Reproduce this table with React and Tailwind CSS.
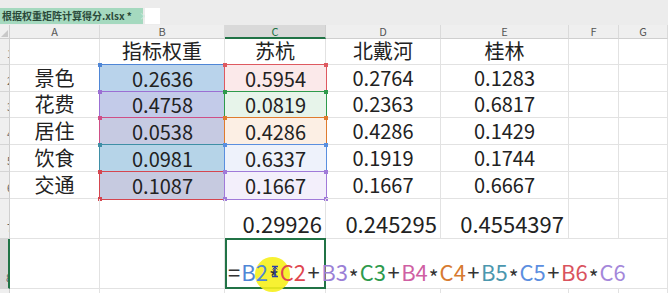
import React from 'react'

const COLS = ['A', 'B', 'C', 'D', 'E', 'F', 'G']

const rows = [
  { n: 2, name: '景色', w: '0.2636', c: '0.5954', d: '0.2764', e: '0.1283', wRef: 'blue', cRef: 'red' },
  { n: 3, name: '花费', w: '0.4758', c: '0.0819', d: '0.2363', e: '0.6817', wRef: 'purple', cRef: 'green' },
  { n: 4, name: '居住', w: '0.0538', c: '0.4286', d: '0.4286', e: '0.1429', wRef: 'pink', cRef: 'orange' },
  { n: 5, name: '饮食', w: '0.0981', c: '0.6337', d: '0.1919', e: '0.1744', wRef: 'teal', cRef: 'blue2' },
  { n: 6, name: '交通', w: '0.1087', c: '0.1667', d: '0.1667', e: '0.6667', wRef: 'red2', cRef: 'purple2' },
]

// reference colours: outline, corner handle, fill, formula text
const REF = {
  blue: { line: 'border-[#4f86d6]', dot: 'bg-[#4f86d6]', fill: 'bg-[#b9d3eb]', text: 'text-[#4f86d6]' },
  purple: { line: 'border-[#9b6fd3]', dot: 'bg-[#9b6fd3]', fill: 'bg-[#c3cbe9]', text: 'text-[#9b7fd6]' },
  pink: { line: 'border-[#cf4f86]', dot: 'bg-[#cf4f86]', fill: 'bg-[#c6cae2]', text: 'text-[#cf5fa3]' },
  teal: { line: 'border-[#3f8fa6]', dot: 'bg-[#3f8fa6]', fill: 'bg-[#b6d4e8]', text: 'text-[#4b97ae]' },
  red2: { line: 'border-[#d5464f]', dot: 'bg-[#d5464f]', fill: 'bg-[#c6cae0]', text: 'text-[#d9535e]' },
  red: { line: 'border-[#de5960]', dot: 'bg-[#de5960]', fill: 'bg-[#fbe9ea]', text: 'text-[#e0474f]' },
  green: { line: 'border-[#2e9a4b]', dot: 'bg-[#2e9a4b]', fill: 'bg-[#e7f4ea]', text: 'text-[#2d9a4c]' },
  orange: { line: 'border-[#df7b2e]', dot: 'bg-[#df7b2e]', fill: 'bg-[#fcefe4]', text: 'text-[#d77a30]' },
  blue2: { line: 'border-[#5a8fdf]', dot: 'bg-[#5a8fdf]', fill: 'bg-[#eef2fb]', text: 'text-[#5b8ee0]' },
  purple2: { line: 'border-[#a07ad9]', dot: 'bg-[#a07ad9]', fill: 'bg-[#f3effb]', text: 'text-[#a487da]' },
}

const formula = [
  ['B2', 'blue'], ['C2', 'red'], ['B3', 'purple'], ['C3', 'green'], ['B4', 'pink'],
  ['C4', 'orange'], ['B5', 'teal'], ['C5', 'blue2'], ['B6', 'red2'], ['C6', 'purple2'],
]

const font = "font-['Noto_Sans_CJK_SC','Noto_Sans',sans-serif]"

const Grid = ({ className = '', children }) => (
  <div className={`relative border-r border-b border-[#e2e2e2] ${className}`}>{children}</div>
)

const RowHead = ({ n, active }) => (
  <div
    className={`flex items-end justify-end overflow-hidden border-b border-[#d5d5d5] text-[11px] leading-none text-[#666] ${
      active ? 'bg-[#d6d6d6] border-r-2 border-r-[#217346]' : 'bg-[#efefef] border-r border-r-[#cfcfcf]'
    }`}
  >
    <span className="mr-[-4px] mb-[5px]">{n}</span>
  </div>
)

const RefCell = ({ refKey, value }) => {
  const r = REF[refKey]
  return (
    <div className={`relative flex items-end justify-center pb-[1px] ${r.fill}`}>
      <span className={`absolute -top-px -left-px -right-px -bottom-px border ${r.line}`} />
      <span className={`absolute -top-[2px] -left-[2px] w-[4px] h-[4px] ${r.dot}`} />
      <span className={`absolute -top-[2px] -right-[2px] w-[4px] h-[4px] ${r.dot}`} />
      <span className={`absolute -bottom-[2px] -left-[2px] w-[4px] h-[4px] ${r.dot}`} />
      <span className={`absolute -bottom-[2px] -right-[2px] w-[4px] h-[4px] ${r.dot}`} />
      <span className="relative text-[20px] leading-[24px] text-[#222]">{value}</span>
    </div>
  )
}

const TextCell = ({ children }) => (
  <Grid className="flex items-end justify-center">
    <span className="text-[20px] leading-[24px] text-[#222] mb-[1px]">{children}</span>
  </Grid>
)

const SumCell = ({ children, pr = 'pr-[3px]' }) => (
  <Grid className={`flex items-end justify-end ${pr}`}>
    <span className="text-[22px] leading-[26px] text-[#222] mb-[2px]">{children}</span>
  </Grid>
)

const App = () => {
  return (
    <div className={`w-[668px] h-[293px] overflow-hidden bg-white ${font}`}>
      {/* file tab */}
      <div className="h-[25px] bg-[#ececec] flex items-end pb-[1px]">
        <div className="h-[16px] w-[143px] bg-[#a5d9bf] flex items-center gap-[2px]">
          <span className="w-[3px] h-[9px] bg-[#f4f4f4]" />
          <span className="text-[10px] leading-none font-semibold text-[#2b4a3a] whitespace-nowrap">
            根据权重矩阵计算得分.xlsx *
          </span>
          <span className="text-[10px] leading-none text-[#d2ebde] ml-[5px]">×</span>
        </div>
        <div className="ml-[2px] h-[16px] w-[15px] bg-white" />
      </div>

      <div className="grid grid-cols-[10px_90px_125px_101px_115px_128px_50px_49px] grid-rows-[14px_26px_27px_26px_27px_27px_27px_40px_50px_20px]">
        {/* column headers */}
        <div className="bg-[#efefef] border-r border-b border-[#cfcfcf] relative">
          <span className="absolute right-[1px] bottom-[1px] w-0 h-0 border-l-[7px] border-l-transparent border-b-[7px] border-b-[#c8c8c8]" />
        </div>
        {COLS.map((c) => (
          <div
            key={c}
            className={`flex items-center justify-center text-[11px] leading-none ${
              c === 'C'
                ? 'bg-[#d9d9d9] border-b-2 border-b-[#217346] text-[#217346] border-r border-r-[#cfcfcf]'
                : 'bg-[#efefef] border-b border-[#cfcfcf] border-r border-r-[#dadada] text-[#555]'
            }`}
          >
            {c}
          </div>
        ))}

        {/* row 1 */}
        <RowHead n={1} />
        <Grid />
        <TextCell>指标权重</TextCell>
        <TextCell>苏杭</TextCell>
        <TextCell>北戴河</TextCell>
        <TextCell>桂林</TextCell>
        <Grid />
        <Grid />

        {/* rows 2 - 6 */}
        {rows.map((r) => (
          <React.Fragment key={r.n}>
            <RowHead n={r.n} />
            <TextCell>{r.name}</TextCell>
            <RefCell refKey={r.wRef} value={r.w} />
            <RefCell refKey={r.cRef} value={r.c} />
            <TextCell>{r.d}</TextCell>
            <TextCell>{r.e}</TextCell>
            <Grid />
            <Grid />
          </React.Fragment>
        ))}

        {/* row 7 */}
        <RowHead n={7} />
        <Grid />
        <Grid />
        <SumCell>0.29926</SumCell>
        <SumCell>0.245295</SumCell>
        <SumCell pr="pr-[4px]">0.4554397</SumCell>
        <Grid />
        <Grid />

        {/* row 8 - formula being edited */}
        <RowHead n={8} active />
        <Grid />
        <Grid />
        <div className="relative z-10 border-2 border-[#217346] -mt-px flex items-end">
          <span className="absolute left-[28px] top-[17px] w-[35px] h-[35px] rounded-full bg-[#f6ef1c]/90" />
          <span className="relative whitespace-nowrap text-[22px] leading-[26px] text-[#333] ml-[1px] mb-[2px]">
            <span className="pr-[1px]">=</span>
            {formula.map(([ref, key], i) => (
              <React.Fragment key={ref}>
                <span className={REF[key].text}>{ref}</span>
                {i < formula.length - 1 &&
                  (i % 2 === 0 ? (
                    <span className="relative top-[5px] px-[1px] text-[21px]">*</span>
                  ) : (
                    <span className="px-[1.5px]">+</span>
                  ))}
              </React.Fragment>
            ))}
          </span>
          <svg className="absolute left-[44px] top-[25px]" width="8" height="13" viewBox="0 0 8 13">
            <path d="M1 1.5h6M4 1.5v10M1 11.5h6" stroke="#2c3fa8" strokeWidth="1.5" fill="none" />
            <path d="M1.5 4.5L4 2l2.5 2.5" stroke="#2c3fa8" strokeWidth="1" fill="none" />
          </svg>
        </div>
        <div className="border-b border-[#e2e2e2]" />
        <div className="border-b border-[#e2e2e2]" />
        <div className="border-b border-[#e2e2e2]" />
        <div className="border-b border-[#e2e2e2] border-r border-r-[#e2e2e2]" />

        {/* row 9 (cut off) */}
        <RowHead n={9} />
        <Grid />
        <Grid />
        <Grid />
        <Grid />
        <Grid />
        <Grid />
        <Grid />
      </div>
    </div>
  )
}

export default App
